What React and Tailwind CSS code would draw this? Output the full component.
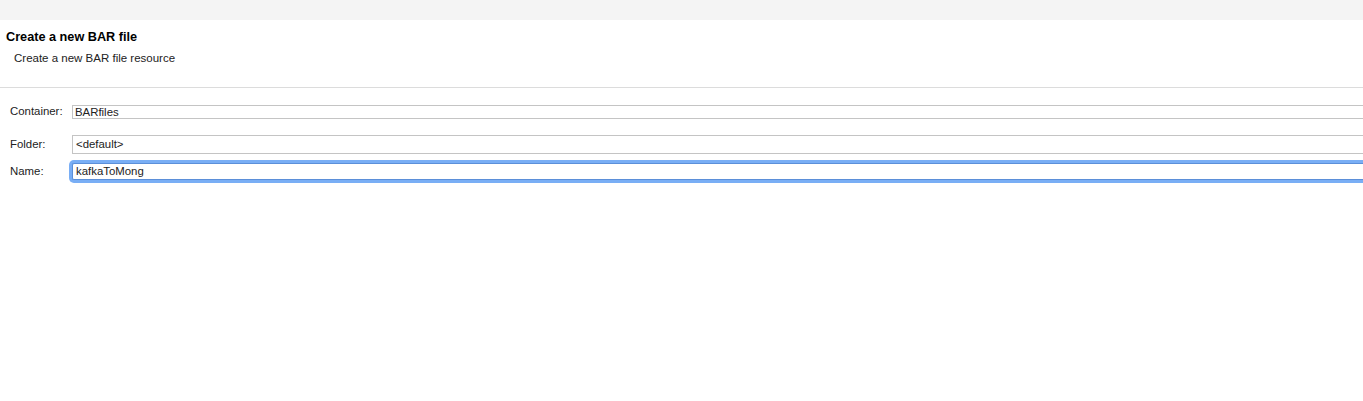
export default function App() {
  return (
    <div className="w-[1363px] h-[401px] bg-white text-black overflow-hidden" style={{ fontFamily: '"Liberation Sans", Arial, sans-serif' }}>
      <div className="h-5 bg-[#f4f4f4]" />
      <div className="h-[68px] border-b border-[#dcdcdc]">
        <div className="pl-[6px] pt-[9px] text-[12.7px] font-bold leading-[16px]">Create a new BAR file</div>
        <div className="pl-[14px] pt-[6px] text-[11.5px] leading-[14px] text-[#222]">Create a new BAR file resource</div>
      </div>

      <div className="pt-[17px] text-[11.4px] text-[#222]">
        <div className="flex items-center h-[14px]">
          <label className="w-[72px] pl-[10px]">Container:</label>
          <div className="flex-1 h-[14px] border border-[#c4c4c4] border-r-0 pl-[2px] leading-[12px]">BARfiles</div>
        </div>
        <div className="flex items-center h-[19px] mt-[16px]">
          <label className="w-[72px] pl-[10px]">Folder:</label>
          <div className="flex-1 h-[19px] border border-[#c4c4c4] border-r-0 pl-[3px] leading-[17px]">&lt;default&gt;</div>
        </div>
        <div className="flex items-center h-[23px] mt-[6px]">
          <label className="w-[72px] pl-[10px]">Name:</label>
          <div className="flex-1 h-[17px] bg-white border border-[#5b8fd9] border-r-0 pl-[3px] leading-[15px] shadow-[0_0_0_3px_#79aef5] rounded-l-[2px]">kafkaToMong</div>
        </div>
      </div>
    </div>
  )
}
